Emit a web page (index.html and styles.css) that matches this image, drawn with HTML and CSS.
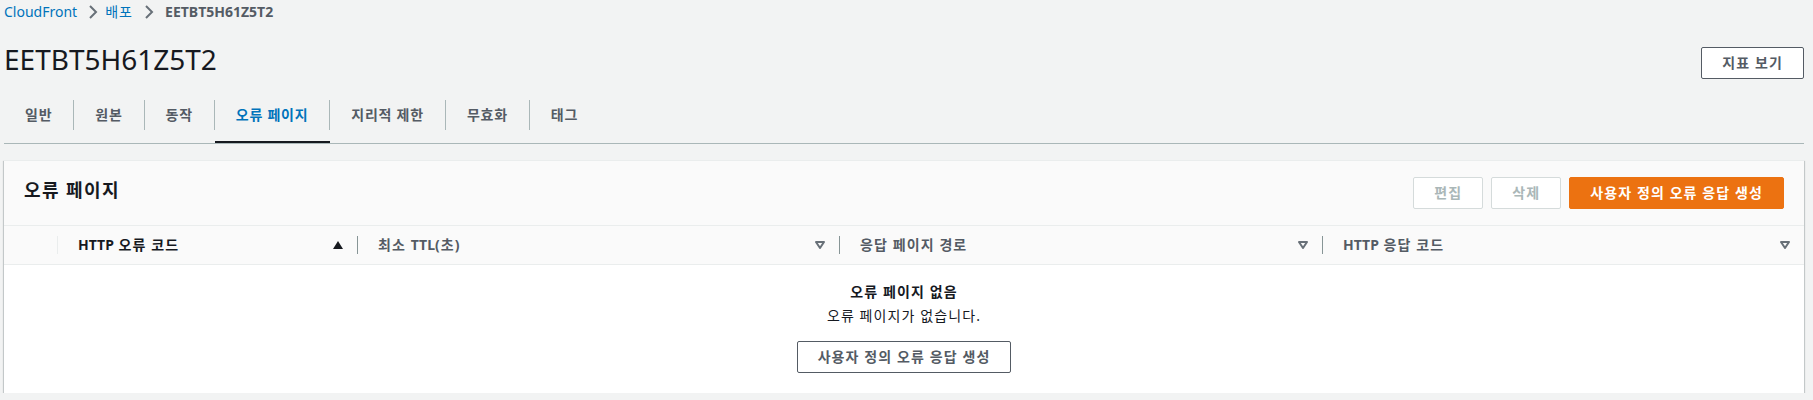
FILE: index.html
```html
<!DOCTYPE html>
<html lang="ko">
<head>
<meta charset="utf-8">
<title>EETBT5H61Z5T2</title>
<link rel="stylesheet" href="styles.css">
</head>
<body>
<div class="page">
  <nav class="breadcrumbs">
    <a class="crumb-link latin" href="#">CloudFront</a>
    <svg class="chev" width="16" height="16" viewBox="0 0 16 16"><polyline points="5,2 11,8 5,14" fill="none" stroke="#687078" stroke-width="2"/></svg>
    <a class="crumb-link" href="#">배포</a>
    <svg class="chev" width="16" height="16" viewBox="0 0 16 16"><polyline points="5,2 11,8 5,14" fill="none" stroke="#687078" stroke-width="2"/></svg>
    <span class="crumb-current latin">EETBT5H61Z5T2</span>
  </nav>

  <header class="page-header">
    <h1 class="page-title latin">EETBT5H61Z5T2</h1>
    <button class="btn btn-normal header-btn">지표 보기</button>
  </header>

  <div class="tabs">
    <div class="tab"><span class="tab-label">일반</span></div>
    <div class="tab"><span class="tab-label">원본</span></div>
    <div class="tab"><span class="tab-label">동작</span></div>
    <div class="tab active"><span class="tab-label">오류 페이지</span></div>
    <div class="tab"><span class="tab-label">지리적 제한</span></div>
    <div class="tab"><span class="tab-label">무효화</span></div>
    <div class="tab last"><span class="tab-label">태그</span></div>
  </div>

  <section class="panel">
    <div class="panel-header">
      <h2 class="panel-title">오류 페이지</h2>
      <div class="actions">
        <button class="btn btn-disabled">편집</button>
        <button class="btn btn-disabled">삭제</button>
        <button class="btn btn-primary">사용자 정의 오류 응답 생성</button>
      </div>
    </div>
    <div class="table-head">
      <div class="th th-select"></div>
      <div class="th col1"><div class="th-inner first sorted"><span><span class="latin">HTTP</span> 오류 코드</span>
        <svg width="10" height="8" viewBox="0 0 10 8"><polygon points="0,8 5,0 10,8" fill="#16191f"/></svg></div></div>
      <div class="th col2"><div class="th-inner"><span>최소 <span class="latin">TTL</span>(초)</span>
        <svg width="10" height="8" viewBox="0 0 10 8"><polygon points="1,1 9,1 5,7" fill="none" stroke="#687078" stroke-width="2" stroke-linejoin="round"/></svg></div></div>
      <div class="th col3"><div class="th-inner"><span>응답 페이지 경로</span>
        <svg width="10" height="8" viewBox="0 0 10 8"><polygon points="1,1 9,1 5,7" fill="none" stroke="#687078" stroke-width="2" stroke-linejoin="round"/></svg></div></div>
      <div class="th col4"><div class="th-inner"><span><span class="latin">HTTP</span> 응답 코드</span>
        <svg width="10" height="8" viewBox="0 0 10 8"><polygon points="1,1 9,1 5,7" fill="none" stroke="#687078" stroke-width="2" stroke-linejoin="round"/></svg></div></div>
    </div>
    <div class="empty">
      <div class="empty-title">오류 페이지 없음</div>
      <div class="empty-text">오류 페이지가 없습니다.</div>
      <button class="btn btn-normal empty-btn">사용자 정의 오류 응답 생성</button>
    </div>
  </section>
</div>
</body>
</html>
```

FILE: styles.css
```css
* { box-sizing: border-box; }

body {
  margin: 0;
  background: #f2f3f3;
  color: #16191f;
  font-family: "Noto Sans", "Noto Sans CJK KR", sans-serif;
  font-size: 14px;
  line-height: 22px;
  letter-spacing: 1.1px;
}

.latin {
  letter-spacing: 0;
}

.page {
  padding: 0 9px 0 4px;
}

/* breadcrumbs */
.breadcrumbs {
  display: flex;
  align-items: center;
  height: 24px;
}
.crumb-link {
  color: #0073bb;
  text-decoration: none;
}
.chev {
  margin: 0 4px 0 8px;
}
.crumb-current {
  color: #545b64;
  font-weight: 700;
  margin-left: 4px;
}

/* header */
.page-header {
  display: flex;
  justify-content: space-between;
  align-items: flex-start;
  margin-top: 15px;
}
.page-title {
  margin: 0;
  font-size: 28px;
  font-weight: 400;
  line-height: 40px;
}
.header-btn {
  margin-top: 8px;
}

/* buttons */
.btn {
  font-family: inherit;
  font-size: 14px;
  font-weight: 700;
  line-height: 22px;
  letter-spacing: 1.1px;
  padding: 4px 20px;
  border-radius: 2px;
  border: 1px solid #545b64;
  background: #fff;
  color: #545b64;
  cursor: pointer;
}
.btn-disabled {
  border-color: #d5dbdb;
  color: #aab7b8;
  cursor: default;
}
.btn-primary {
  background: #ec7211;
  border-color: #ec7211;
  color: #fff;
}

/* tabs */
.tabs {
  display: flex;
  margin-top: 9px;
  border-bottom: 1px solid #aab7b8;
}
.tab {
  padding: 12px 0 11px;
  border-bottom: 2px solid transparent;
  font-weight: 700;
  color: #545b64;
  letter-spacing: 0.75px;
}
.tab-label {
  display: block;
  padding: 0 21px;
  line-height: 30px;
  border-right: 1px solid #aab7b8;
}
.tab.last .tab-label {
  border-right: none;
}
.tab.active {
  border-bottom-color: #16191f;
  color: #0073bb;
}

/* panel */
.panel {
  margin-top: 16px;
  background: #fff;
  border-top: 1px solid #eaeded;
  box-shadow: 0 1px 1px 0 rgba(0, 28, 36, 0.3), 1px 1px 1px 0 rgba(0, 28, 36, 0.15), -1px 1px 1px 0 rgba(0, 28, 36, 0.15);
}
.panel-header {
  display: flex;
  justify-content: space-between;
  align-items: flex-start;
  background: #fafafa;
  padding: 16px 20px 16px;
  border-bottom: 1px solid #eaeded;
}
.panel-title {
  margin: 0;
  font-size: 18px;
  font-weight: 700;
  line-height: 26px;
  letter-spacing: 1.4px;
}
.actions {
  display: flex;
  gap: 8px;
}

/* table head */
.table-head {
  display: flex;
  height: 39px;
  background: #fafafa;
  border-bottom: 1px solid #eaeded;
}
.th {
  display: flex;
  align-items: center;
}
.th-select { width: 53px; }
.col1 { width: 300px; }
.col2 { width: 482px; }
.col3 { width: 483px; }
.col4 { flex: 1; }
.th-inner {
  flex: 1;
  display: flex;
  align-items: center;
  justify-content: space-between;
  height: 18px;
  line-height: 18px;
  padding: 0 14px 0 20px;
  border-left: 1px solid #879596;
  font-weight: 700;
  color: #545b64;
}
.th-inner.first {
  border-left-color: #eaeded;
}
.th-inner.sorted {
  color: #16191f;
}

/* empty state */
.empty {
  padding: 16px 20px 20px;
  text-align: center;
}
.empty-title {
  font-weight: 700;
}
.empty-text {
  margin-top: 2px;
}
.empty-btn {
  margin-top: 14px;
}
```
